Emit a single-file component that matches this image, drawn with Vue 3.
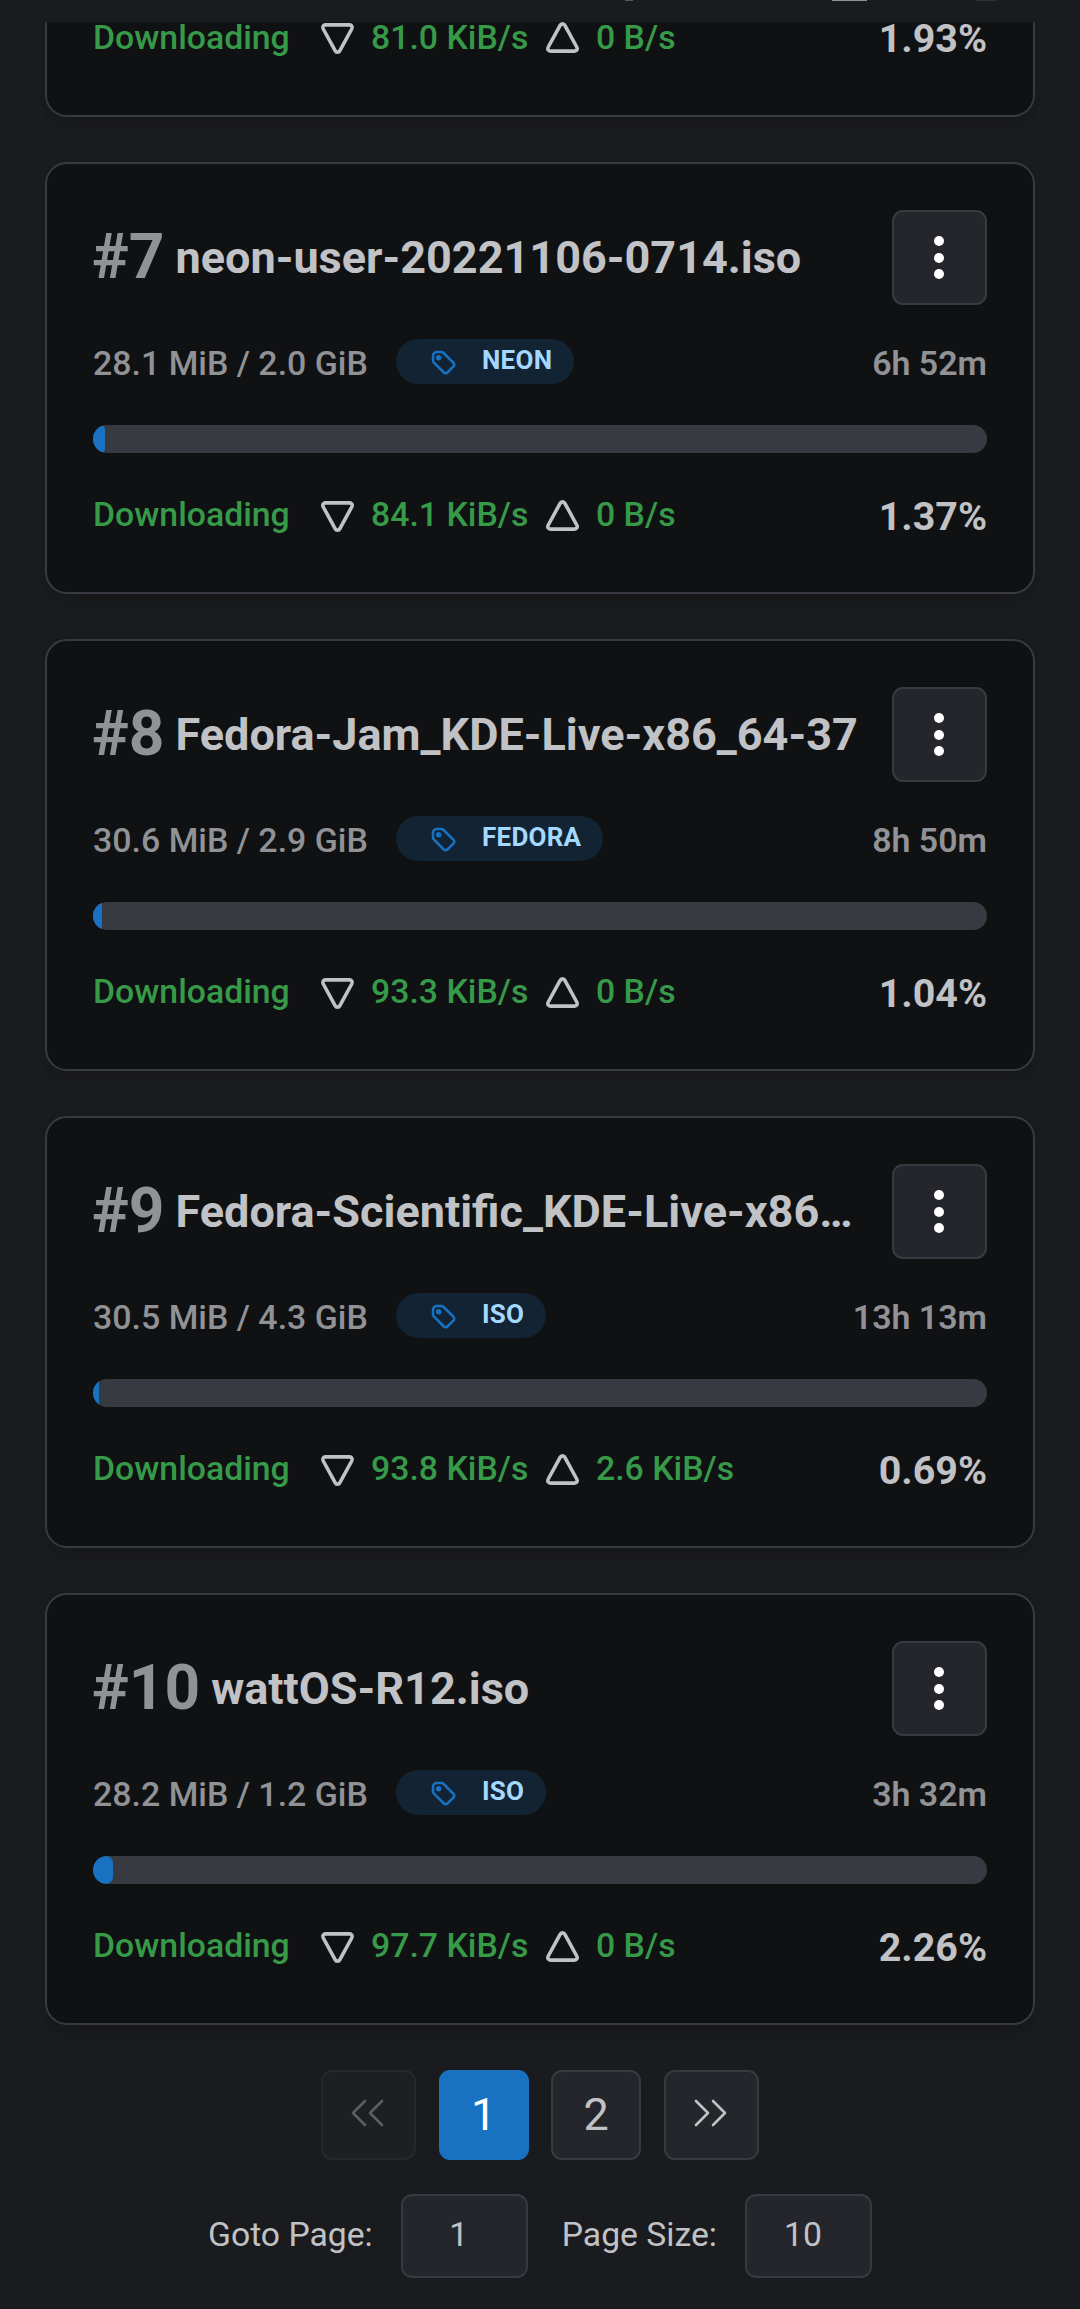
<script setup>
const torrents = [
  { id: 6, name: 'torrent', size: '', tag: '', eta: '', down: '81.0 KiB/s', up: '0 B/s', pct: 1.93 },
  { id: 7, name: 'neon-user-20221106-0714.iso', size: '28.1 MiB / 2.0 GiB', tag: 'NEON', eta: '6h 52m', down: '84.1 KiB/s', up: '0 B/s', pct: 1.37 },
  { id: 8, name: 'Fedora-Jam_KDE-Live-x86_64-37', size: '30.6 MiB / 2.9 GiB', tag: 'FEDORA', eta: '8h 50m', down: '93.3 KiB/s', up: '0 B/s', pct: 1.04 },
  { id: 9, name: 'Fedora-Scientific_KDE-Live-x86…', size: '30.5 MiB / 4.3 GiB', tag: 'ISO', eta: '13h 13m', down: '93.8 KiB/s', up: '2.6 KiB/s', pct: 0.69 },
  { id: 10, name: 'wattOS-R12.iso', size: '28.2 MiB / 1.2 GiB', tag: 'ISO', eta: '3h 32m', down: '97.7 KiB/s', up: '0 B/s', pct: 2.26 },
]
</script>

<template>
  <div class="page">
    <header class="topbar"><i class="m1"></i><i class="m2"></i><i class="m3"></i></header>
    <main class="list">
      <article v-for="(t, i) in torrents" :key="t.id" class="card" :class="{ partial: i === 0 }">
        <template v-if="i > 0">
          <div class="head">
            <h2 class="title"><span class="num">#{{ t.id }}</span><span class="name">{{ t.name }}</span></h2>
            <button class="menu" aria-label="Menu"><span></span><span></span><span></span></button>
          </div>
          <div class="meta">
            <span class="size">{{ t.size }}</span>
            <span class="badge">
              <svg class="tag" viewBox="0 0 24 24" fill="none" stroke="currentColor" stroke-width="2" stroke-linecap="round" stroke-linejoin="round">
                <circle cx="8.5" cy="8.5" r="1.2" fill="currentColor" />
                <path d="M4 7v3.859c0 .537.213 1.052.593 1.432l8.116 8.116a2.025 2.025 0 0 0 2.864 0l4.834-4.834a2.025 2.025 0 0 0 0-2.864l-8.117-8.116A2.025 2.025 0 0 0 10.859 4H7a3 3 0 0 0-3 3z" />
              </svg>
              <span class="tagname">{{ t.tag }}</span>
            </span>
            <span class="eta">{{ t.eta }}</span>
          </div>
          <div class="track"><div class="fill" :style="{ width: t.pct + '%' }"></div></div>
        </template>
        <div class="stats">
          <span class="state">Downloading</span>
          <svg class="tri" viewBox="0 0 24 24"><path d="M5 4h14c1.3 0 2 1.2 1.4 2.3l-7 12.8c-.6 1.2-2.2 1.2-2.8 0L3.6 6.3C3 5.2 3.7 4 5 4z" /></svg>
          <span class="speed dl">{{ t.down }}</span>
          <svg class="tri up" viewBox="0 0 24 24"><path d="M5 20h14c1.3 0 2-1.2 1.4-2.3l-7-12.8c-.6-1.2-2.2-1.2-2.8 0L3.6 17.7C3 18.8 3.7 20 5 20z" /></svg>
          <span class="speed">{{ t.up }}</span>
          <span class="pct">{{ t.pct.toFixed(2) }}%</span>
        </div>
      </article>
    </main>
    <nav class="pager">
      <button class="pg wide disabled" aria-label="Previous">
        <svg viewBox="0 0 34 28"><path d="M15 2L3 14l12 12M32 2L20 14l12 12" /></svg>
      </button>
      <button class="pg active"><span>1</span></button>
      <button class="pg"><span>2</span></button>
      <button class="pg wide" aria-label="Next">
        <svg viewBox="0 0 34 28"><path d="M2 2l12 12L2 26M19 2l12 12-12 12" /></svg>
      </button>
    </nav>
    <div class="controls">
      <span class="label">Goto Page:</span><div class="field">1</div>
      <span class="label second">Page Size:</span><div class="field">10</div>
    </div>
  </div>
</template>

<style>
body { margin: 0; background: #1a1b1e; }
</style>

<style scoped>
* { box-sizing: border-box; }
.page { height: 2309px; overflow: hidden; background: #1a1b1e; color: #c1c2c5; font-family: Roboto, sans-serif; }
.topbar { position: relative; height: 22px; background: #1a1b1e; }
.topbar i { position: absolute; top: 0; height: 1px; }
.m1 { left: 625px; width: 8px; background: #55565a; }
.m2 { left: 832px; width: 35px; background: #909296; }
.m3 { left: 976px; width: 21px; background: #303136; }
.list { display: flex; flex-direction: column; gap: 45px; padding: 0 45px; }
.card { height: 432px; padding: 46px; border: 2px solid #373a40; border-radius: 22px; background: #101113; box-shadow: 0 26px 20px -14px rgba(0,0,0,.05), 0 3px 8px rgba(0,0,0,.05); }
.partial { height: 95px; padding-top: 0; border-top: 0; border-radius: 0 0 22px 22px; }
.head { display: flex; height: 95px; align-items: center; justify-content: space-between; }
.title { margin: 0; display: flex; align-items: center; white-space: nowrap; line-height: 80px; }
.num { margin-bottom: 1px; margin-left: -1px; font-size: 62.2px; font-weight: 700; color: #909296; }
.name { margin-left: 11px; font-size: 45px; font-weight: 700; }
.menu { width: 95px; height: 95px; padding: 0 1px 0 0; display: flex; flex-direction: column; align-items: center; justify-content: center; gap: 6.5px; border: 2px solid #373a40; border-radius: 11px; background: #25262b; }
.menu span { width: 10px; height: 10px; border-radius: 50%; background: #fff; }
.meta { display: flex; align-items: center; height: 45px; margin-top: 34px; color: #909296; font-size: 33.9px; font-weight: 500; white-space: nowrap; }
.size { width: 303px; padding-top: 3px; }
.badge { display: flex; align-items: center; height: 45px; padding: 0 22px 0 32px; border-radius: 23px; background: #122433; color: #a5d8ff; font-size: 26px; font-weight: 700; }
.tag { width: 30px; height: 30px; color: #1971c2; }
.tagname { margin-left: 24px; letter-spacing: .25px; margin-top: -3px; }
.eta { margin-left: auto; padding-top: 3px; font-weight: 600; }
.track { height: 28px; margin-top: 41px; border-radius: 14px; overflow: hidden; background: #373a40; }
.fill { height: 100%; background: #1971c2; border-radius: 14px 8px 8px 14px; }
.stats { display: flex; height: 50px; margin-top: 36.5px; align-items: center; color: #379a49; font-size: 33.8px; font-weight: 500; white-space: nowrap; }
.partial .stats { margin-top: -10px; }
.state { width: 224px; }
.tri { width: 41px; height: 41px; margin-top: 3px; fill: none; stroke: #c1c2c5; stroke-width: 2.1; flex: none; }
.tri.up { margin-top: 1px; }
.speed { margin-left: 13px; }
.dl { width: 157px; margin-right: 14px; }
.pct { margin-left: auto; margin-top: 3px; color: #c1c2c5; font-size: 39.4px; font-weight: 700; }
.pager { display: flex; justify-content: center; gap: 22.5px; margin-top: 45px; }
.pg { width: 90px; height: 90px; padding: 0; display: flex; align-items: center; justify-content: center; border: 2px solid #373a40; border-radius: 11px; background: #25262b; color: #c1c2c5; font: 400 45px Roboto, sans-serif; }
.pg span { margin-top: -1px; }
.wide { width: 95px; }
.active { background: #1971c2; border-color: #1971c2; color: #fff; }
.disabled { opacity: .4; }
.disabled svg { margin-right: 4px; }
.pg svg { width: 34px; height: 28px; margin-top: -4px; fill: none; stroke: currentColor; stroke-width: 2.6; stroke-linecap: round; stroke-linejoin: round; }
.controls { display: flex; align-items: center; justify-content: center; margin-top: 34px; font-size: 33.7px; }
.label { margin-top: -3px; }
.field { width: 127px; height: 84px; margin-left: 28px; padding: 0 11px 3px 0; display: flex; align-items: center; justify-content: center; border: 2px solid #373a40; border-radius: 11px; background: #25262b; }
.second { margin-left: 34px; }
</style>
